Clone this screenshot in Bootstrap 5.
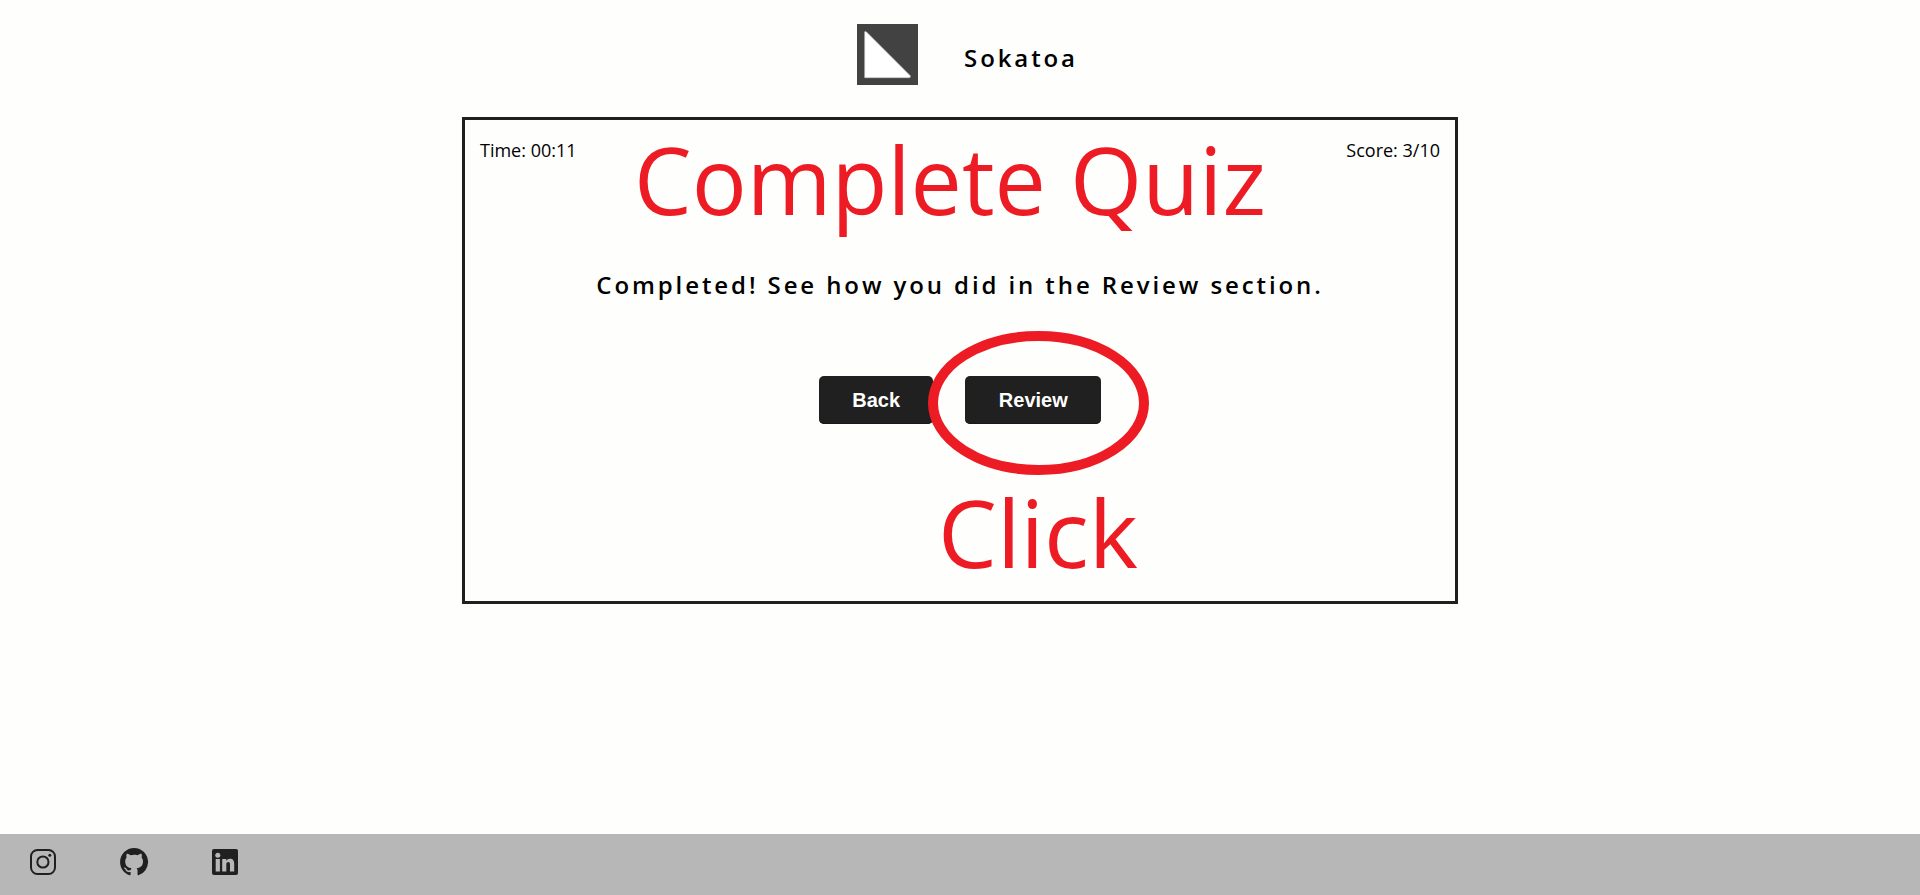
<!DOCTYPE html>
<html lang="en">
<head>
<meta charset="utf-8">
<title>Sokatoa</title>
<link rel="stylesheet" href="https://cdn.jsdelivr.net/npm/bootstrap@5.3.0/dist/css/bootstrap.min.css">
<style>
body{background:#fefefd;color:#000;font-family:"Open Sans","Noto Sans",sans-serif;font-size:18px;line-height:1.5}
.brand{padding:24px 0 0 12px;height:117px;gap:46px}
.brand-name{font-size:24px;font-weight:600;letter-spacing:2.9px;line-height:36px;margin:16px -3px 0 0}
.quiz{width:996px;height:487px;border:3px solid #202020}
.stats{padding:17px 15px 0;height:90px}
.done{font-size:24px;font-weight:600;letter-spacing:2.9px;line-height:36px;margin:57px 0 0}
.choices{gap:32px;margin-top:73px}
.quiz-btn{--bs-btn-color:#fff;--bs-btn-bg:#202020;--bs-btn-hover-color:#fff;--bs-btn-hover-bg:#333;--bs-btn-border-width:0;--bs-btn-border-radius:5px;--bs-btn-padding-x:33.4px;--bs-btn-padding-y:0;height:48px;font:bold 20px "Liberation Sans",Arial,sans-serif;box-shadow:inset 0 -1px 0 #191919}
.notes{left:-3px;top:-3px;pointer-events:none;overflow:visible}
.notes text{font-size:94px;fill:#ed1c24}
.social{height:61px;background:#b7b7b7;color:#202020;padding:14px 27.5px 0;gap:61px}
.social a{color:inherit;line-height:0}
</style>
<script src="https://cdn.jsdelivr.net/npm/bootstrap@5.3.0/dist/js/bootstrap.bundle.min.js"></script>
</head>
<body class="d-flex flex-column min-vh-100">
<header class="brand d-flex justify-content-center align-items-start">
  <svg width="61" height="61" viewBox="0 0 61 61"><path fill="#424242" d="M0 0h61v61H0z"/><path fill="#fff" stroke="#c8c8c8" stroke-width=".6" stroke-linejoin="round" d="M7.7 7.8Q8.5 7 9.5 8L53 51.5Q54 53.5 52.5 53.7H7.7Z"/></svg>
  <h1 class="brand-name">Sokatoa</h1>
</header>
<main class="quiz mx-auto position-relative">
  <div class="stats d-flex justify-content-between"><span id="time">Time: 00:11</span><span id="score">Score: 3/10</span></div>
  <h2 class="done text-center">Completed! See how you did in the Review section.</h2>
  <div class="choices d-flex justify-content-center">
    <button class="btn quiz-btn" type="button">Back</button>
    <button class="btn quiz-btn" type="button">Review</button>
  </div>
  <svg class="notes position-absolute" width="996" height="487" viewBox="462 117 996 487">
    <text x="634" y="215" textLength="412" lengthAdjust="spacingAndGlyphs">Complete</text>
    <text x="1070" y="215" textLength="196" lengthAdjust="spacingAndGlyphs">Quiz</text>
    <ellipse cx="1038.5" cy="403" rx="105.5" ry="67" fill="none" stroke="#ed1c24" stroke-width="10"/>
    <text x="938" y="568" textLength="200" lengthAdjust="spacingAndGlyphs">Click</text>
  </svg>
</main>
<footer class="social d-flex mt-auto">
  <a href="#" aria-label="Instagram"><svg width="30" height="30" viewBox="0 0 30 30" fill="none" stroke="currentColor" stroke-width="2"><rect x="3" y="2" width="24" height="24" rx="6.5"/><circle cx="14.9" cy="14" r="5.6"/><circle cx="21.8" cy="7.3" r="1.5" fill="currentColor" stroke="none"/></svg></a>
  <a href="#" aria-label="GitHub"><svg width="30" height="28" viewBox="-.6 0 17.1 16" fill="currentColor"><path d="M8 0C3.58 0 0 3.58 0 8c0 3.54 2.29 6.53 5.47 7.59.4.07.55-.17.55-.38 0-.19-.01-.82-.01-1.49-2.01.37-2.53-.49-2.69-.94-.09-.23-.48-.94-.82-1.13-.28-.15-.68-.52-.01-.53.63-.01 1.08.58 1.23.82.72 1.21 1.87.87 2.33.66.07-.52.28-.87.51-1.07-1.78-.2-3.64-.89-3.64-3.95 0-.87.31-1.59.82-2.15-.08-.2-.36-1.02.08-2.12 0 0 .67-.21 2.2.82A7.6 7.6 0 0 1 8 3.86c.68 0 1.36.09 2 .27 1.53-1.04 2.2-.82 2.2-.82.44 1.1.16 1.92.08 2.12.51.56.82 1.27.82 2.15 0 3.07-1.87 3.75-3.65 3.95.29.25.54.73.54 1.48 0 1.07-.01 1.93-.01 2.2 0 .21.15.46.55.38A8.01 8.01 0 0 0 16 8c0-4.42-3.58-8-8-8z"/></svg></a>
  <a href="#" aria-label="LinkedIn"><svg width="30" height="30" viewBox="0 0 30 30"><rect x="2" y="1" width="26" height="26" rx="2" fill="currentColor"/><g fill="#b7b7b7"><circle cx="7.8" cy="7.2" r="2.5"/><path d="M5.7 11h4.2v12.5H5.7zM12.2 11h4v1.7c.8-1.3 2.1-2 3.8-2 3.1 0 4.2 2 4.2 5.2v7.6H20v-6.8c0-1.6-.4-2.6-1.7-2.6-1.5 0-2 1.1-2 2.6v6.8h-4.1z"/></g></svg></a>
</footer>
</body>
</html>
